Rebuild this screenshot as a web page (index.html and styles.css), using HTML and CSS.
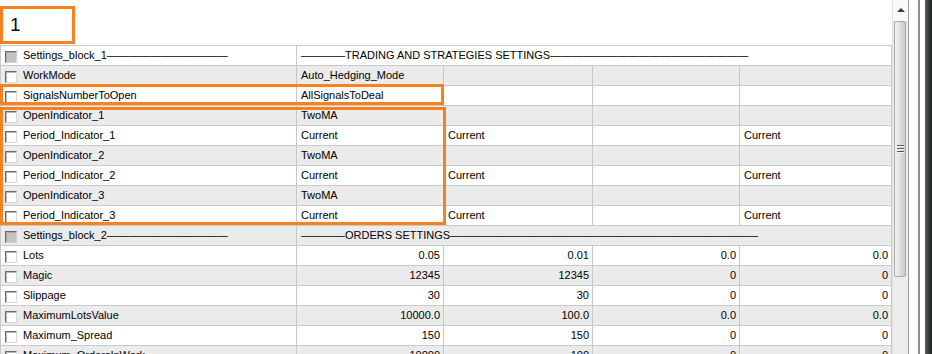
FILE: index.html
```html
<!DOCTYPE html>
<html lang="en">
<head>
    <meta charset="UTF-8">
    <meta name="viewport" content="width=device-width, initial-scale=1.0">
    <title>Expert Inputs</title>
    <link rel="stylesheet" href="styles.css">
</head>
<body>
    <div class="screen">
        <div class="content">
            <div class="top">
                <div class="tag">1</div>
            </div>

            <div class="sheet">
                <div class="grid">
                    <div class="row block">
                        <div class="cell name"><span class="check"></span>Settings_block_1———————————</div>
                        <div class="cell title">————TRADING AND STRATEGIES SETTINGS——————————————————</div>
                    </div>
                    <div class="row">
                        <div class="cell name"><span class="check"></span>WorkMode</div>
                        <div class="cell">Auto_Hedging_Mode</div>
                        <div class="cell"></div>
                        <div class="cell"></div>
                        <div class="cell"></div>
                    </div>
                    <div class="row">
                        <div class="cell name"><span class="check"></span>SignalsNumberToOpen</div>
                        <div class="cell">AllSignalsToDeal</div>
                        <div class="cell"></div>
                        <div class="cell"></div>
                        <div class="cell"></div>
                    </div>
                    <div class="row">
                        <div class="cell name"><span class="check"></span>OpenIndicator_1</div>
                        <div class="cell">TwoMA</div>
                        <div class="cell"></div>
                        <div class="cell"></div>
                        <div class="cell"></div>
                    </div>
                    <div class="row">
                        <div class="cell name"><span class="check"></span>Period_Indicator_1</div>
                        <div class="cell">Current</div>
                        <div class="cell">Current</div>
                        <div class="cell"></div>
                        <div class="cell">Current</div>
                    </div>
                    <div class="row">
                        <div class="cell name"><span class="check"></span>OpenIndicator_2</div>
                        <div class="cell">TwoMA</div>
                        <div class="cell"></div>
                        <div class="cell"></div>
                        <div class="cell"></div>
                    </div>
                    <div class="row">
                        <div class="cell name"><span class="check"></span>Period_Indicator_2</div>
                        <div class="cell">Current</div>
                        <div class="cell">Current</div>
                        <div class="cell"></div>
                        <div class="cell">Current</div>
                    </div>
                    <div class="row">
                        <div class="cell name"><span class="check"></span>OpenIndicator_3</div>
                        <div class="cell">TwoMA</div>
                        <div class="cell"></div>
                        <div class="cell"></div>
                        <div class="cell"></div>
                    </div>
                    <div class="row">
                        <div class="cell name"><span class="check"></span>Period_Indicator_3</div>
                        <div class="cell">Current</div>
                        <div class="cell">Current</div>
                        <div class="cell"></div>
                        <div class="cell">Current</div>
                    </div>
                    <div class="row block">
                        <div class="cell name"><span class="check"></span>Settings_block_2———————————</div>
                        <div class="cell title">————ORDERS SETTINGS————————————————————————————</div>
                    </div>
                    <div class="row">
                        <div class="cell name"><span class="check"></span>Lots</div>
                        <div class="cell num">0.05</div>
                        <div class="cell num">0.01</div>
                        <div class="cell num">0.0</div>
                        <div class="cell num">0.0</div>
                    </div>
                    <div class="row">
                        <div class="cell name"><span class="check"></span>Magic</div>
                        <div class="cell num">12345</div>
                        <div class="cell num">12345</div>
                        <div class="cell num">0</div>
                        <div class="cell num">0</div>
                    </div>
                    <div class="row">
                        <div class="cell name"><span class="check"></span>Slippage</div>
                        <div class="cell num">30</div>
                        <div class="cell num">30</div>
                        <div class="cell num">0</div>
                        <div class="cell num">0</div>
                    </div>
                    <div class="row">
                        <div class="cell name"><span class="check"></span>MaximumLotsValue</div>
                        <div class="cell num">10000.0</div>
                        <div class="cell num">100.0</div>
                        <div class="cell num">0.0</div>
                        <div class="cell num">0.0</div>
                    </div>
                    <div class="row">
                        <div class="cell name"><span class="check"></span>Maximum_Spread</div>
                        <div class="cell num">150</div>
                        <div class="cell num">150</div>
                        <div class="cell num">0</div>
                        <div class="cell num">0</div>
                    </div>
                    <div class="row">
                        <div class="cell name"><span class="check"></span>Maximum_OrdersInWork</div>
                        <div class="cell num">10000</div>
                        <div class="cell num">100</div>
                        <div class="cell num">0</div>
                        <div class="cell num">0</div>
                    </div>
                </div>

                <!-- highlight frames drawn over the table -->
                <div class="mark mark-signals"></div>
                <div class="mark mark-indicators"></div>
            </div>
        </div>

        <div class="scrollbar">
            <div class="scroll-up"><span class="arrow"></span></div>
            <div class="thumb"><span class="grip"></span></div>
        </div>

        <div class="frame"></div>
    </div>
</body>
</html>
```

FILE: styles.css
```css
body {
    margin: 0;
    background-color: #fff;
    font-family: "Liberation Sans", Arial, sans-serif;
    font-size: 11px;
    color: #000;
}
.screen {
    display: flex;
    width: 932px;
    height: 354px;
    overflow: hidden;
}
.content {
    width: 892px;
    flex-shrink: 0;
}

/* top label */
.top {
    height: 45px;
    box-sizing: border-box;
    padding-top: 6px;
}
.tag {
    width: 75px;
    height: 38px;
    box-sizing: border-box;
    border: 3px solid #f5821f;
    padding-left: 7px;
    font-size: 19px;
    line-height: 32px;
    color: #0a0a14;
}

/* parameter table */
.sheet {
    position: relative;
}
.grid {
    display: flex;
    flex-direction: column;
    gap: 1px;
    background-color: #c9c9c9;
    border: 1px solid #c9c9c9;
}
.row {
    display: grid;
    grid-template-columns: 295px 146px 148px 146px 151px;
    column-gap: 1px;
    height: 19px;
}
.cell {
    background-color: #fff;
    padding: 0 4px;
    line-height: 19px;
    white-space: nowrap;
    overflow: hidden;
}
.row:nth-child(even) .cell {
    background-color: #ebebeb;
}
.cell.name {
    display: flex;
    align-items: center;
}
.cell.num {
    text-align: right;
    padding-right: 3px;
}
.block .title {
    grid-column: 2 / 6;
    overflow: visible;
}
.check {
    width: 12px;
    height: 12px;
    box-sizing: border-box;
    margin: 2px 6px 0 0;
    flex-shrink: 0;
    background-color: #fff;
    border: 1px solid;
    border-color: #6a6a6a #dadada #dadada #6a6a6a;
    box-shadow: inset 1px 1px 0 #b8b8b8;
}
.block .check {
    background-color: #c3c3c3;
    border-color: #6a6a6a #d0d0d0 #d0d0d0 #6a6a6a;
    box-shadow: inset 1px 1px 0 #a8a8a8;
}

/* orange highlight frames */
.mark {
    position: absolute;
    left: 0;
    box-sizing: border-box;
    border: 3px solid #f5821f;
}
.mark-signals {
    top: 39px;
    width: 444px;
    height: 21px;
}
.mark-indicators {
    top: 62px;
    width: 446px;
    height: 118px;
}

/* vertical scrollbar */
.scrollbar {
    width: 16px;
    flex-shrink: 0;
    background-color: #ececec;
    border-left: 1px solid #e2e2e2;
    box-sizing: border-box;
}
.scroll-up {
    height: 21px;
    background-color: #fafafa;
    display: flex;
    align-items: center;
    justify-content: center;
}
.arrow {
    width: 0;
    height: 0;
    border-left: 4px solid transparent;
    border-right: 4px solid transparent;
    border-bottom: 4px solid #3c3c3c;
    margin-top: -1px;
}
.thumb {
    height: 256px;
    margin: 0 2px 0 1px;
    box-sizing: border-box;
    border: 1px solid #a9a9a9;
    border-radius: 2px;
    background: linear-gradient(to right, #f2f2f2, #e0e0e0 50%, #c8c8c8);
    display: flex;
    align-items: center;
    justify-content: center;
}
.grip {
    width: 7px;
    height: 9px;
    background: repeating-linear-gradient(to bottom, #5a5a5a 0 1px, #f4f4f4 1px 2px, transparent 2px 3px);
}

/* window frame edge */
.frame {
    flex: 1;
    background: linear-gradient(to right,
        #9c9c9c 0 1px,
        #fff 1px 10px,
        #8e8e8e 10px 12px,
        #fff 12px 17px,
        #5c5c5c 17px,
        #1c241f 24px);
}
```
